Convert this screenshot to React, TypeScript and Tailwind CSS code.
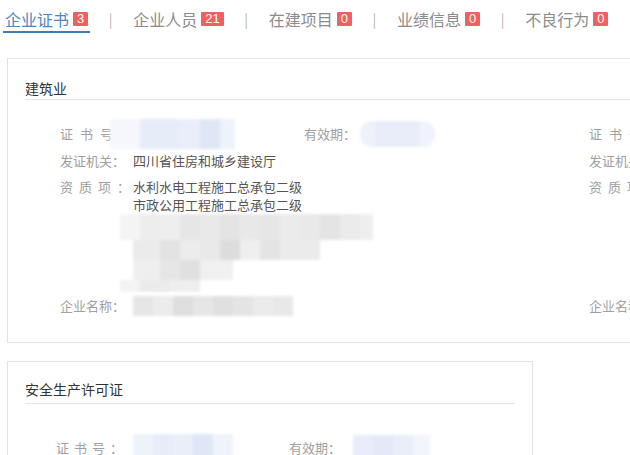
import React from "react";

type Cell = [number, string];
type Row = { h: number; ml?: number; cells: Cell[] };

function Mosaic({ rows, className = "" }: { rows: Row[]; className?: string }) {
  return (
    <div className={"flex flex-col blur-[1.5px] " + className}>
      {rows.map((r, i) => (
        <div key={i} className="flex" style={{ height: r.h, marginLeft: r.ml ?? 0 }}>
          {r.cells.map((c, j) => (
            <div key={j} style={{ width: c[0], background: c[1] }} />
          ))}
        </div>
      ))}
    </div>
  );
}

const tabs = [
  { name: "企业证书", n: "3", active: true },
  { name: "企业人员", n: "21" },
  { name: "在建项目", n: "0" },
  { name: "业绩信息", n: "0" },
  { name: "不良行为", n: "0" },
];

function Tabs() {
  return (
    <div className="flex items-start pl-[3px]">
      {tabs.map((t, i) => (
        <React.Fragment key={t.name}>
          {i > 0 && (
            <span className="mx-[18px] w-[5px] h-[33px] pt-[6px] flex items-center justify-center text-[14px] text-[#b5b5b5]">
              |
            </span>
          )}
          <div
            className={
              "flex items-center gap-[4px] h-[33px] pt-[6px] px-[2px] border-b-2 " +
              (t.active ? "border-[#3a7eb8]" : "border-transparent")
            }
          >
            <span className={"text-[16px] leading-[20px] " + (t.active ? "text-[#4a86c2]" : "text-[#8c8c8c]")}>
              {t.name}
            </span>
            <span className="h-[14px] px-[4px] bg-[#f06060] text-white text-[13px] leading-[14px] rounded-[1px] font-['Liberation_Sans',sans-serif]">
              {t.n}
            </span>
          </div>
        </React.Fragment>
      ))}
    </div>
  );
}

const certBlue: Row[] = [
  {
    h: 30,
    cells: [
      [30, "#f5f7fc"],
      [40, "#e6ecf8"],
      [20, "#e9eef9"],
      [20, "#dfe6f5"],
      [15, "#eef2fb"],
    ],
  },
];

const validBlue: Row[] = [
  {
    h: 26,
    cells: [
      [15, "#eef1fa"],
      [45, "#e8edf9"],
      [15, "#f0f3fb"],
    ],
  },
];

const qualMosaic: Row[] = [
  {
    h: 26,
    ml: -13,
    cells: [
      [20, "#f4f4f4"],
      [20, "#ededed"],
      [20, "#eeeeee"],
      [20, "#e6e6e6"],
      [20, "#e9e9e9"],
      [20, "#e4e4e4"],
      [20, "#e8e8e8"],
      [20, "#e6e6e6"],
      [20, "#ebebeb"],
      [20, "#e9e9e9"],
      [20, "#e4e4e4"],
      [20, "#ebebeb"],
      [13, "#eeeeee"],
    ],
  },
  {
    h: 20,
    cells: [
      [27, "#ebebeb"],
      [20, "#e3e3e3"],
      [20, "#ececec"],
      [20, "#e9e9e9"],
      [20, "#dcdcdc"],
      [20, "#efefef"],
      [20, "#e4e4e4"],
      [40, "#ebebeb"],
    ],
  },
  {
    h: 20,
    cells: [
      [27, "#efefef"],
      [20, "#e6e6e6"],
      [20, "#e0e0e0"],
      [33, "#f0f0f0"],
    ],
  },
  {
    h: 12,
    ml: -13,
    cells: [
      [20, "#f3f3f3"],
      [30, "#ebebeb"],
      [30, "#eeeeee"],
    ],
  },
];

const nameMosaic: Row[] = [
  {
    h: 20,
    cells: [
      [20, "#e6e6e6"],
      [20, "#ececec"],
      [20, "#dedede"],
      [20, "#e6e6e6"],
      [20, "#e0e0e0"],
      [20, "#e4e4e4"],
      [20, "#ebebeb"],
      [20, "#e8e8e8"],
    ],
  },
];

const card2Cert: Row[] = [
  {
    h: 28,
    cells: [
      [20, "#eef2fb"],
      [20, "#e6ecf8"],
      [20, "#e9eef9"],
      [20, "#dfe6f5"],
      [20, "#f0f3fb"],
    ],
  },
];

const card2Valid: Row[] = [
  {
    h: 26,
    cells: [
      [20, "#e8edf9"],
      [20, "#e3e9f7"],
      [20, "#e9eef9"],
      [17, "#f2f5fc"],
    ],
  },
];

function Item1({ full }: { full: boolean }) {
  return (
    <div className="w-[529px] shrink-0 pl-[52px] pt-[20px] text-[13px]">
      <div className="flex h-[27px] items-center">
        <div className="w-[244px] flex items-center">
          <span className="w-[50px] tracking-[7px] text-[#a0a0a0] whitespace-nowrap">证书号</span>
          {full && <Mosaic rows={certBlue} className="w-[125px]" />}
        </div>
        <span className="text-[#a0a0a0] whitespace-nowrap">有效期：</span>
        {full && <Mosaic rows={validBlue} className="ml-[4px] rounded-[12px] overflow-hidden" />}
      </div>
      <div className="flex h-[27px] items-center">
        <span className="w-[73px] shrink-0 text-[#a0a0a0] whitespace-nowrap">发证机关：</span>
        {full && <span className="text-[#555] whitespace-nowrap">四川省住房和城乡建设厅</span>}
      </div>
      <div className="flex pt-[4px]">
        <span className="w-[73px] shrink-0 leading-[18px] whitespace-nowrap text-[#a0a0a0]">
          <span className="tracking-[6px]">资质项</span>：
        </span>
        {full ? (
          <div className="flex flex-col">
            <span className="leading-[18px] text-[#555] whitespace-nowrap">水利水电工程施工总承包二级</span>
            <span className="leading-[18px] text-[#555] whitespace-nowrap">市政公用工程施工总承包二级</span>
            <Mosaic rows={qualMosaic} />
          </div>
        ) : (
          <div className="h-[114px]" />
        )}
      </div>
      <div className="flex h-[27px] items-center mb-[23px]">
        <span className="w-[73px] shrink-0 text-[#a0a0a0] whitespace-nowrap">企业名称：</span>
        {full && <Mosaic rows={nameMosaic} />}
      </div>
    </div>
  );
}

export default function App() {
  return (
    <div className="w-[630px] h-[455px] overflow-hidden bg-white font-['Noto_Sans_CJK_SC',sans-serif]">
      <Tabs />
      <div className="ml-[7px] mt-[25px] w-[1100px] border border-[#e2e2e2]">
        <div className="mx-[17px] pt-[20px] pb-[2px] border-b border-[#e5e5e5] text-[14px] leading-[18px] text-[#333]">
          建筑业
        </div>
        <div className="flex">
          <Item1 full />
          <Item1 full={false} />
        </div>
      </div>
      <div className="ml-[7px] mt-[18px] w-[526px] h-[200px] border border-[#e2e2e2]">
        <div className="mx-[17px] pt-[18px] pb-[5px] border-b border-[#e5e5e5] text-[14px] leading-[18px] text-[#333]">
          安全生产许可证
        </div>
        <div className="pl-[48px] pt-[30px] text-[13px]">
          <div className="flex h-[27px] items-center">
            <div className="w-[233px] flex items-center">
              <span className="w-[77px] whitespace-nowrap text-[#a0a0a0]">
                <span className="tracking-[5px]">证书号</span>：
              </span>
              <Mosaic rows={card2Cert} />
            </div>
            <span className="text-[#a0a0a0] whitespace-nowrap">有效期：</span>
            <Mosaic rows={card2Valid} className="ml-[12px]" />
          </div>
        </div>
      </div>
    </div>
  );
}
